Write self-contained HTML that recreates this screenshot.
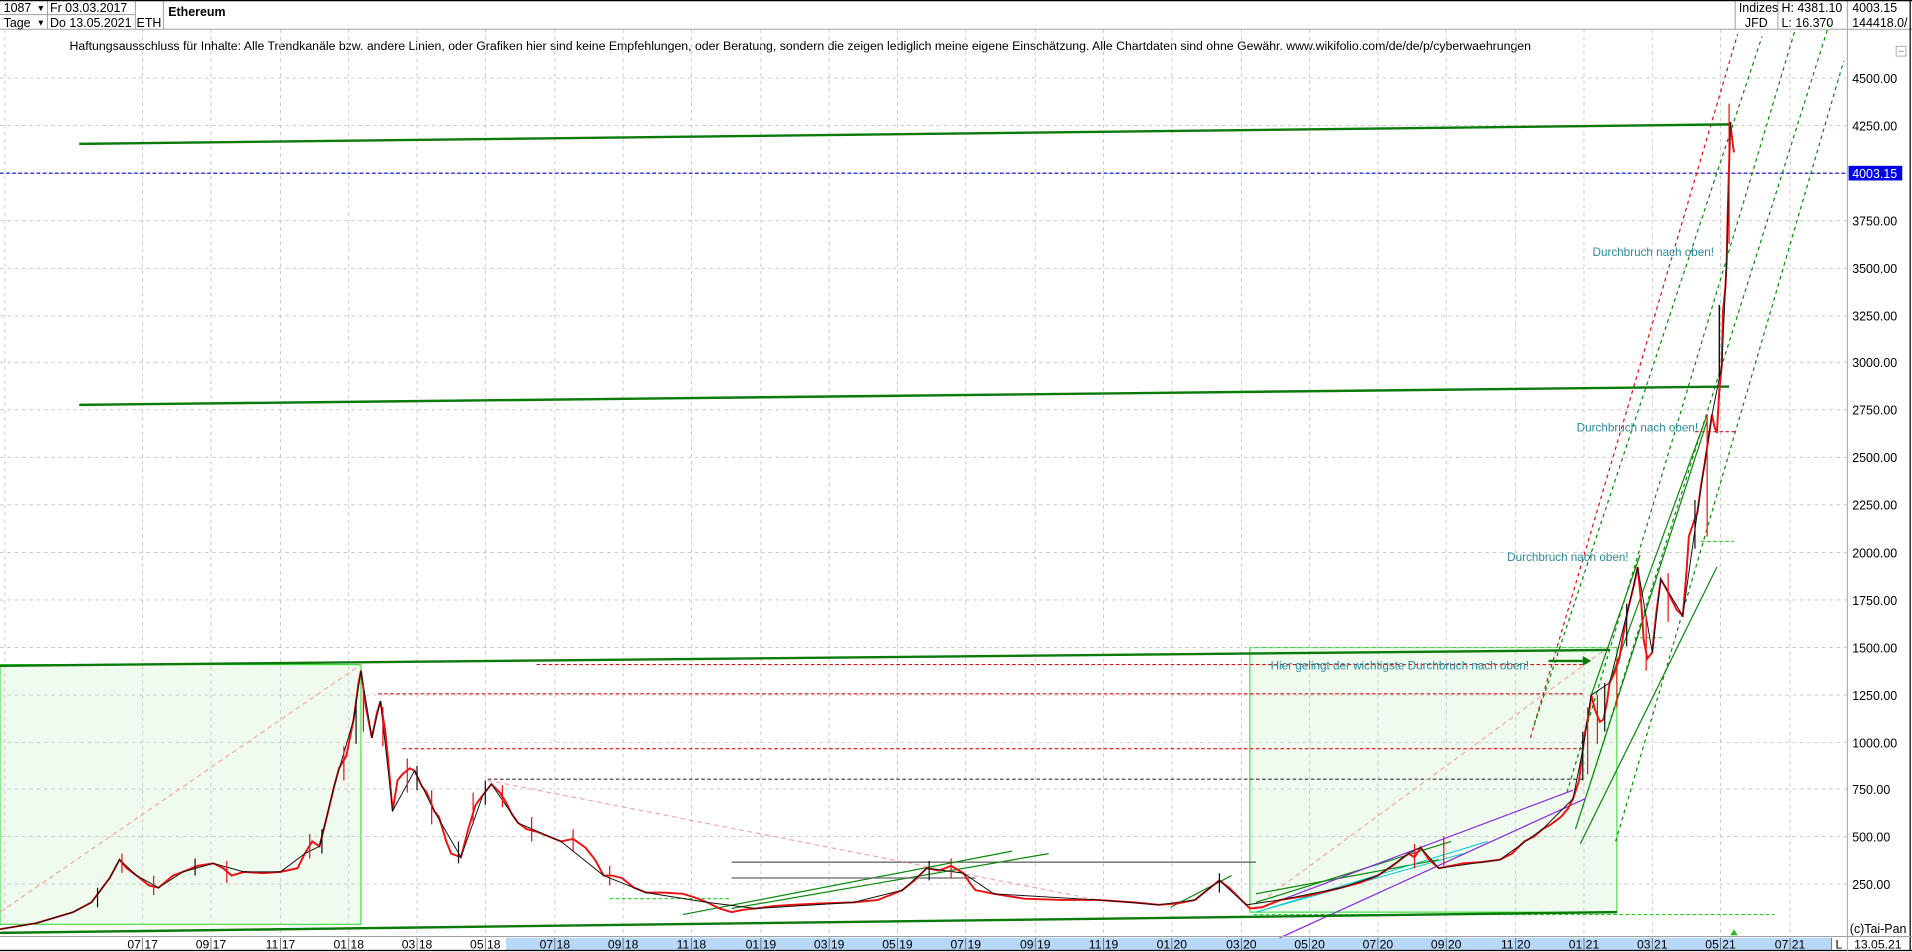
<!DOCTYPE html>
<html><head><meta charset="utf-8"><style>
html,body{margin:0;padding:0;background:#fff;overflow:hidden}
svg{display:block}
text{font-family:"Liberation Sans",sans-serif}
</style></head><body>
<svg width="1912" height="952" viewBox="0 0 1568 780.7" preserveAspectRatio="none" xmlns="http://www.w3.org/2000/svg">
<rect x="0" y="0" width="1568" height="780.7" fill="#fff"/>
<g stroke="#a0a0a0" stroke-width="0.8" fill="none">
<line x1="0" y1="24" x2="1568" y2="24"/>
<line x1="0" y1="12" x2="111" y2="12"/>
<line x1="39" y1="0" x2="39" y2="24"/>
<line x1="111" y1="0" x2="111" y2="24"/>
<line x1="134" y1="0" x2="134" y2="24"/>
<line x1="1423" y1="0" x2="1423" y2="24"/>
<line x1="1458" y1="0" x2="1458" y2="24"/>
<line x1="1515" y1="0" x2="1515" y2="768"/>
</g>
<line x1="0" y1="0.5" x2="1568" y2="0.5" stroke="#000" stroke-width="1"/>
<line x1="1566.5" y1="0" x2="1566.5" y2="780" stroke="#000" stroke-width="1"/>
<g font-size="10.2" fill="#000">
<text x="3" y="10">1087</text><text x="30" y="9" font-size="7">▼</text>
<text x="41" y="10">Fr 03.03.2017</text>
<text x="3" y="22">Tage</text><text x="30" y="21" font-size="7">▼</text>
<text x="41" y="22">Do 13.05.2021</text>
<text x="112" y="22">ETH</text>
<text x="138" y="13" font-weight="bold">Ethereum</text>
<text x="1426" y="10">Indizes</text>
<text x="1431" y="22">JFD</text>
<text x="1461" y="10">H: 4381.10</text>
<text x="1461" y="22">L: 16.370</text>
<text x="1519" y="10">4003.15</text>
<text x="1519" y="22">144418.0/</text>
</g>
<text x="57" y="41" font-size="10.1" fill="#000">Haftungsausschluss für Inhalte: Alle Trendkanäle bzw. andere Linien, oder Grafiken hier sind keine Empfehlungen, oder Beratung, sondern die zeigen lediglich meine eigene Einschätzung. Alle Chartdaten sind ohne Gewähr.  www.wikifolio.com/de/de/p/cyberwaehrungen</text>
<rect x="1555" y="38" width="8" height="8" fill="none" stroke="#a0a0a0" stroke-width="0.7"/>
<line x1="1557" y1="42" x2="1561" y2="42" stroke="#808080" stroke-width="0.7"/>

<rect x="0" y="545" width="296" height="213" fill="#effbef" stroke="#33dd33" stroke-width="0.9"/>
<rect x="1025" y="531" width="301" height="217" fill="#effbef" stroke="#33dd33" stroke-width="0.9"/>

<g stroke="#c4c4c4" stroke-width="0.7" stroke-dasharray="3,3">
<line x1="0" y1="64" x2="1515" y2="64"/><line x1="0" y1="103" x2="1515" y2="103"/>
<line x1="0" y1="142" x2="1515" y2="142"/><line x1="0" y1="181" x2="1515" y2="181"/>
<line x1="0" y1="220" x2="1515" y2="220"/><line x1="0" y1="259" x2="1515" y2="259"/>
<line x1="0" y1="297" x2="1515" y2="297"/><line x1="0" y1="336" x2="1515" y2="336"/>
<line x1="0" y1="375" x2="1515" y2="375"/><line x1="0" y1="414" x2="1515" y2="414"/>
<line x1="0" y1="453" x2="1515" y2="453"/><line x1="0" y1="492" x2="1515" y2="492"/>
<line x1="0" y1="531" x2="1515" y2="531"/><line x1="0" y1="570" x2="1515" y2="570"/>
<line x1="0" y1="609" x2="1515" y2="609"/><line x1="0" y1="647" x2="1515" y2="647"/>
<line x1="0" y1="686" x2="1515" y2="686"/><line x1="0" y1="725" x2="1515" y2="725"/>
<line x1="4" y1="24" x2="4" y2="768"/>
<line x1="117" y1="24" x2="117" y2="768"/><line x1="173" y1="24" x2="173" y2="768"/>
<line x1="230" y1="24" x2="230" y2="768"/><line x1="286" y1="24" x2="286" y2="768"/>
<line x1="342" y1="24" x2="342" y2="768"/><line x1="398" y1="24" x2="398" y2="768"/>
<line x1="455" y1="24" x2="455" y2="768"/><line x1="511" y1="24" x2="511" y2="768"/>
<line x1="567" y1="24" x2="567" y2="768"/><line x1="624" y1="24" x2="624" y2="768"/>
<line x1="680" y1="24" x2="680" y2="768"/><line x1="736" y1="24" x2="736" y2="768"/>
<line x1="792" y1="24" x2="792" y2="768"/><line x1="849" y1="24" x2="849" y2="768"/>
<line x1="905" y1="24" x2="905" y2="768"/><line x1="961" y1="24" x2="961" y2="768"/>
<line x1="1018" y1="24" x2="1018" y2="768"/><line x1="1074" y1="24" x2="1074" y2="768"/>
<line x1="1130" y1="24" x2="1130" y2="768"/><line x1="1186" y1="24" x2="1186" y2="768"/>
<line x1="1243" y1="24" x2="1243" y2="768"/><line x1="1299" y1="24" x2="1299" y2="768"/>
<line x1="1355" y1="24" x2="1355" y2="768"/><line x1="1411" y1="24" x2="1411" y2="768"/>
<line x1="1468" y1="24" x2="1468" y2="768"/>
</g>

<g stroke-width="0.9" stroke-dasharray="3,2" fill="none">
<line x1="310" y1="569" x2="1300" y2="569" stroke="#e01010"/>
<line x1="330" y1="614" x2="1300" y2="614" stroke="#e01010"/>
<line x1="440" y1="545" x2="1300" y2="545" stroke="#e01010"/>
<line x1="400" y1="639" x2="1300" y2="639" stroke="#333"/>
<line x1="1390" y1="354" x2="1425" y2="354" stroke="#e01010"/>
<line x1="1028" y1="750" x2="1455" y2="750" stroke="#22cc22"/>
<line x1="1395" y1="444" x2="1422" y2="444" stroke="#22cc22"/>
<line x1="1340" y1="523" x2="1365" y2="523" stroke="#22cc22"/>
<line x1="500" y1="737" x2="600" y2="737" stroke="#22cc22"/>
<line x1="600" y1="707" x2="1030" y2="707" stroke="#333" stroke-dasharray="none"/>
<line x1="0" y1="142" x2="1515" y2="142" stroke="#0000dd"/>
</g>
<g stroke="#f4a0a0" stroke-width="0.9" stroke-dasharray="4,3" fill="none">
<line x1="0" y1="748" x2="296" y2="545"/>
<line x1="1040" y1="735" x2="1320" y2="530"/>
<line x1="400" y1="640" x2="900" y2="738"/>
</g>
<g stroke-width="1" stroke-dasharray="3,3" fill="none">
<line x1="1255" y1="605" x2="1425" y2="28" stroke="#e01010"/>
<line x1="1258" y1="595" x2="1445" y2="30" stroke="#0a8a0a"/>
<line x1="1285" y1="650" x2="1472" y2="25" stroke="#0a8a0a"/>
<line x1="1305" y1="640" x2="1500" y2="20" stroke="#0a8a0a"/>
<line x1="1325" y1="690" x2="1512" y2="50" stroke="#0a8a0a"/>
</g>
<g stroke="#0a8a0a" stroke-width="1" fill="none">
<line x1="1292" y1="680" x2="1400" y2="345"/>
<line x1="1296" y1="692" x2="1408" y2="465"/>
<line x1="1305" y1="570" x2="1345" y2="455"/>
<line x1="1320" y1="560" x2="1400" y2="340"/>
<line x1="560" y1="750" x2="830" y2="698"/>
<line x1="600" y1="745" x2="860" y2="700"/>
<line x1="960" y1="744" x2="1010" y2="718"/>
<line x1="1030" y1="740" x2="1190" y2="690"/>
<line x1="1030" y1="733" x2="1180" y2="705"/>
<line x1="600" y1="720" x2="800" y2="720" stroke="#666"/>
</g>
<g stroke="#8a2be2" stroke-width="1" fill="none">
<line x1="1030" y1="778" x2="1300" y2="655"/>
<line x1="1040" y1="742" x2="1290" y2="648"/>
</g>
<g stroke="#00c8d0" stroke-width="0.8" fill="none">
<line x1="1030" y1="748" x2="1200" y2="700"/>
<line x1="1040" y1="745" x2="1220" y2="690"/>
</g>
<g stroke="#0a7a0a" stroke-width="2" fill="none">
<line x1="65" y1="118" x2="1418" y2="102"/>
<line x1="65" y1="332" x2="1418" y2="317"/>
<line x1="0" y1="546" x2="1320" y2="533"/>
<line x1="0" y1="765" x2="1326" y2="748"/>
<line x1="1270" y1="542" x2="1298" y2="542"/>
</g>
<polygon points="1298,538 1305,542 1298,546" fill="#0a7a0a"/>

<polyline fill="none" stroke="#ee1010" stroke-width="1.6" points="0,762 30,757 60,748 75,740 90,720 98,705 104,712 112,718 122,726 130,728 142,718 150,715 162,710 175,708 183,712 190,718 200,715 215,716 230,715 244,712 250,700 256,690 262,694 268,670 274,645 278,630 284,620 290,590 294,560 296,550 300,580 305,605 309,585 312,575 316,600 318,620 322,665 326,640 330,635 336,630 340,632 346,645 350,650 356,665 360,670 366,690 370,700 378,703 384,680 390,660 396,652 403,643 410,650 415,658 420,668 425,675 432,680 440,682 450,686 460,690 470,688 480,695 488,705 495,718 502,718 510,720 520,728 530,732 545,732 560,733 570,736 580,740 590,745 600,748 610,746 620,745 635,743 650,742 670,741 700,740 720,738 740,730 750,722 760,712 770,714 780,710 790,716 796,725 800,730 815,733 840,737 870,738 900,738 930,740 950,742 965,741 980,738 990,730 1000,722 1008,728 1015,735 1022,742 1025,745 1035,744 1050,738 1075,734 1100,728 1115,724 1130,718 1142,710 1155,700 1160,703 1165,695 1172,705 1180,712 1190,710 1200,708 1215,707 1230,705 1240,700 1250,690 1258,686 1265,680 1272,676 1280,670 1286,663 1290,655 1295,640 1298,615 1300,600 1303,585 1305,570 1308,582 1312,592 1315,590 1318,575 1320,560 1324,552 1328,540 1331,522 1335,500 1340,480 1343,465 1346,495 1348,525 1351,540 1355,535 1358,505 1362,475 1366,482 1370,490 1375,500 1380,505 1383,470 1385,440 1389,428 1392,420 1395,398 1398,380 1401,360 1404,340 1406,350 1408,355 1410,320 1412,300 1413,255 1415,235 1416,215 1417,170 1419,100 1421,118 1422,125"/>
<polyline fill="none" stroke="#111" stroke-width="0.8" points="0,762 30,757 60,748 75,740 90,720 98,705 112,718 130,728 150,715 175,708 200,715 230,715 250,700 262,694 274,645 290,590 296,550 305,605 312,575 322,665 340,632 356,665 378,703 396,652 403,643 425,675 460,690 495,718 530,732 580,740 620,745 700,740 740,730 760,712 790,716 815,733 900,738 950,742 980,738 1000,722 1022,742 1050,738 1100,728 1130,718 1155,700 1165,695 1180,712 1230,705 1265,680 1290,655 1298,615 1305,570 1320,560 1335,500 1343,465 1355,535 1362,475 1380,505 1392,420 1404,340 1412,300 1416,215 1419,100"/>
<!-- wick jitter -->
<g stroke="#ee1010" stroke-width="1">
<line x1="100" y1="700" x2="100" y2="716"/><line x1="126" y1="718" x2="126" y2="734"/>
<line x1="186" y1="706" x2="186" y2="724"/><line x1="254" y1="684" x2="254" y2="704"/>
<line x1="282" y1="612" x2="282" y2="640"/><line x1="298" y1="560" x2="298" y2="600"/>
<line x1="314" y1="580" x2="314" y2="612"/><line x1="334" y1="622" x2="334" y2="650"/>
<line x1="354" y1="648" x2="354" y2="676"/><line x1="388" y1="650" x2="388" y2="676"/>
<line x1="412" y1="644" x2="412" y2="662"/><line x1="436" y1="670" x2="436" y2="690"/>
<line x1="470" y1="680" x2="470" y2="698"/><line x1="500" y1="710" x2="500" y2="726"/>
<line x1="780" y1="704" x2="780" y2="720"/><line x1="1160" y1="692" x2="1160" y2="712"/>
<line x1="1184" y1="686" x2="1184" y2="710"/><line x1="1302" y1="580" x2="1302" y2="635"/>
<line x1="1310" y1="570" x2="1310" y2="610"/><line x1="1326" y1="540" x2="1326" y2="580"/>
<line x1="1350" y1="505" x2="1350" y2="550"/><line x1="1368" y1="470" x2="1368" y2="510"/>
<line x1="1400" y1="340" x2="1400" y2="440"/>
</g>
<g stroke="#111" stroke-width="1">
<line x1="80" y1="728" x2="80" y2="744"/><line x1="160" y1="704" x2="160" y2="718"/>
<line x1="264" y1="680" x2="264" y2="700"/><line x1="292" y1="575" x2="292" y2="610"/>
<line x1="342" y1="628" x2="342" y2="648"/><line x1="376" y1="690" x2="376" y2="708"/>
<line x1="398" y1="640" x2="398" y2="660"/><line x1="762" y1="706" x2="762" y2="722"/>
<line x1="1000" y1="716" x2="1000" y2="732"/><line x1="1298" y1="600" x2="1298" y2="640"/>
<line x1="1316" y1="560" x2="1316" y2="600"/><line x1="1334" y1="495" x2="1334" y2="530"/>
<line x1="1390" y1="410" x2="1390" y2="450"/>
</g>
<line x1="1410" y1="250" x2="1410" y2="310" stroke="#111" stroke-width="1.2"/>
<line x1="1418" y1="85" x2="1418" y2="200" stroke="#ee1010" stroke-width="1"/>

<g font-size="9.6" fill="#2a8a9a">
<text x="1306" y="210">Durchbruch nach oben!</text>
<text x="1293" y="354">Durchbruch nach oben!</text>
<text x="1236" y="460">Durchbruch nach oben!</text>
<text x="1042" y="549">Hier gelingt der wichtigste Durchbruch nach oben!</text>
</g>

<rect x="1516" y="136" width="44" height="12" fill="#0000ee"/>
<g font-size="10.2" fill="#000">
<text x="1519" y="146" fill="#fff">4003.15</text>
<text x="1519" y="68">4500.00</text><text x="1519" y="107">4250.00</text>
<text x="1519" y="185">3750.00</text><text x="1519" y="224">3500.00</text>
<text x="1519" y="263">3250.00</text><text x="1519" y="301">3000.00</text>
<text x="1519" y="340">2750.00</text><text x="1519" y="379">2500.00</text>
<text x="1519" y="418">2250.00</text><text x="1519" y="457">2000.00</text>
<text x="1519" y="496">1750.00</text><text x="1519" y="535">1500.00</text>
<text x="1519" y="574">1250.00</text><text x="1519" y="613">1000.00</text>
<text x="1519" y="651">750.00</text><text x="1519" y="690">500.00</text>
<text x="1519" y="729">250.00</text>
<text x="1517" y="765">(c)Tai-Pan</text>
</g>
<polygon points="1419,767 1422,762 1425,767" fill="#22bb22"/>

<line x1="0" y1="768" x2="1568" y2="768" stroke="#a0a0a0" stroke-width="0.8"/>
<rect x="415" y="769" width="1087" height="10" fill="#b8d8f8"/>
<line x1="0" y1="779.5" x2="1568" y2="779.5" stroke="#000" stroke-width="1"/>
<line x1="1515" y1="768" x2="1515" y2="780" stroke="#a0a0a0" stroke-width="0.8"/>
<g font-size="10" fill="#000" text-anchor="middle">
<text x="117" y="778">07 17</text><text x="173" y="778">09 17</text><text x="230" y="778">11 17</text>
<text x="286" y="778">01 18</text><text x="342" y="778">03 18</text><text x="398" y="778">05 18</text>
<text x="455" y="778">07 18</text><text x="511" y="778">09 18</text><text x="567" y="778">11 18</text>
<text x="624" y="778">01 19</text><text x="680" y="778">03 19</text><text x="736" y="778">05 19</text>
<text x="792" y="778">07 19</text><text x="849" y="778">09 19</text><text x="905" y="778">11 19</text>
<text x="961" y="778">01 20</text><text x="1018" y="778">03 20</text><text x="1074" y="778">05 20</text>
<text x="1130" y="778">07 20</text><text x="1186" y="778">09 20</text><text x="1243" y="778">11 20</text>
<text x="1299" y="778">01 21</text><text x="1355" y="778">03 21</text><text x="1411" y="778">05 21</text>
<text x="1468" y="778">07 21</text>
<text x="1508" y="778">L</text>
<text x="1540" y="778">13.05.21</text>
</g>
<g stroke="#555" stroke-width="0.6">
<line x1="117" y1="769" x2="117" y2="779"/><line x1="173" y1="769" x2="173" y2="779"/><line x1="230" y1="769" x2="230" y2="779"/>
<line x1="286" y1="769" x2="286" y2="779"/><line x1="342" y1="769" x2="342" y2="779"/><line x1="398" y1="769" x2="398" y2="779"/>
<line x1="455" y1="769" x2="455" y2="779"/><line x1="511" y1="769" x2="511" y2="779"/><line x1="567" y1="769" x2="567" y2="779"/>
<line x1="624" y1="769" x2="624" y2="779"/><line x1="680" y1="769" x2="680" y2="779"/><line x1="736" y1="769" x2="736" y2="779"/>
<line x1="792" y1="769" x2="792" y2="779"/><line x1="849" y1="769" x2="849" y2="779"/><line x1="905" y1="769" x2="905" y2="779"/>
<line x1="961" y1="769" x2="961" y2="779"/><line x1="1018" y1="769" x2="1018" y2="779"/><line x1="1074" y1="769" x2="1074" y2="779"/>
<line x1="1130" y1="769" x2="1130" y2="779"/><line x1="1186" y1="769" x2="1186" y2="779"/><line x1="1243" y1="769" x2="1243" y2="779"/>
<line x1="1299" y1="769" x2="1299" y2="779"/><line x1="1355" y1="769" x2="1355" y2="779"/><line x1="1411" y1="769" x2="1411" y2="779"/>
<line x1="1468" y1="769" x2="1468" y2="779"/><line x1="1502" y1="769" x2="1502" y2="779"/>
</g>
</svg>
</body></html>
